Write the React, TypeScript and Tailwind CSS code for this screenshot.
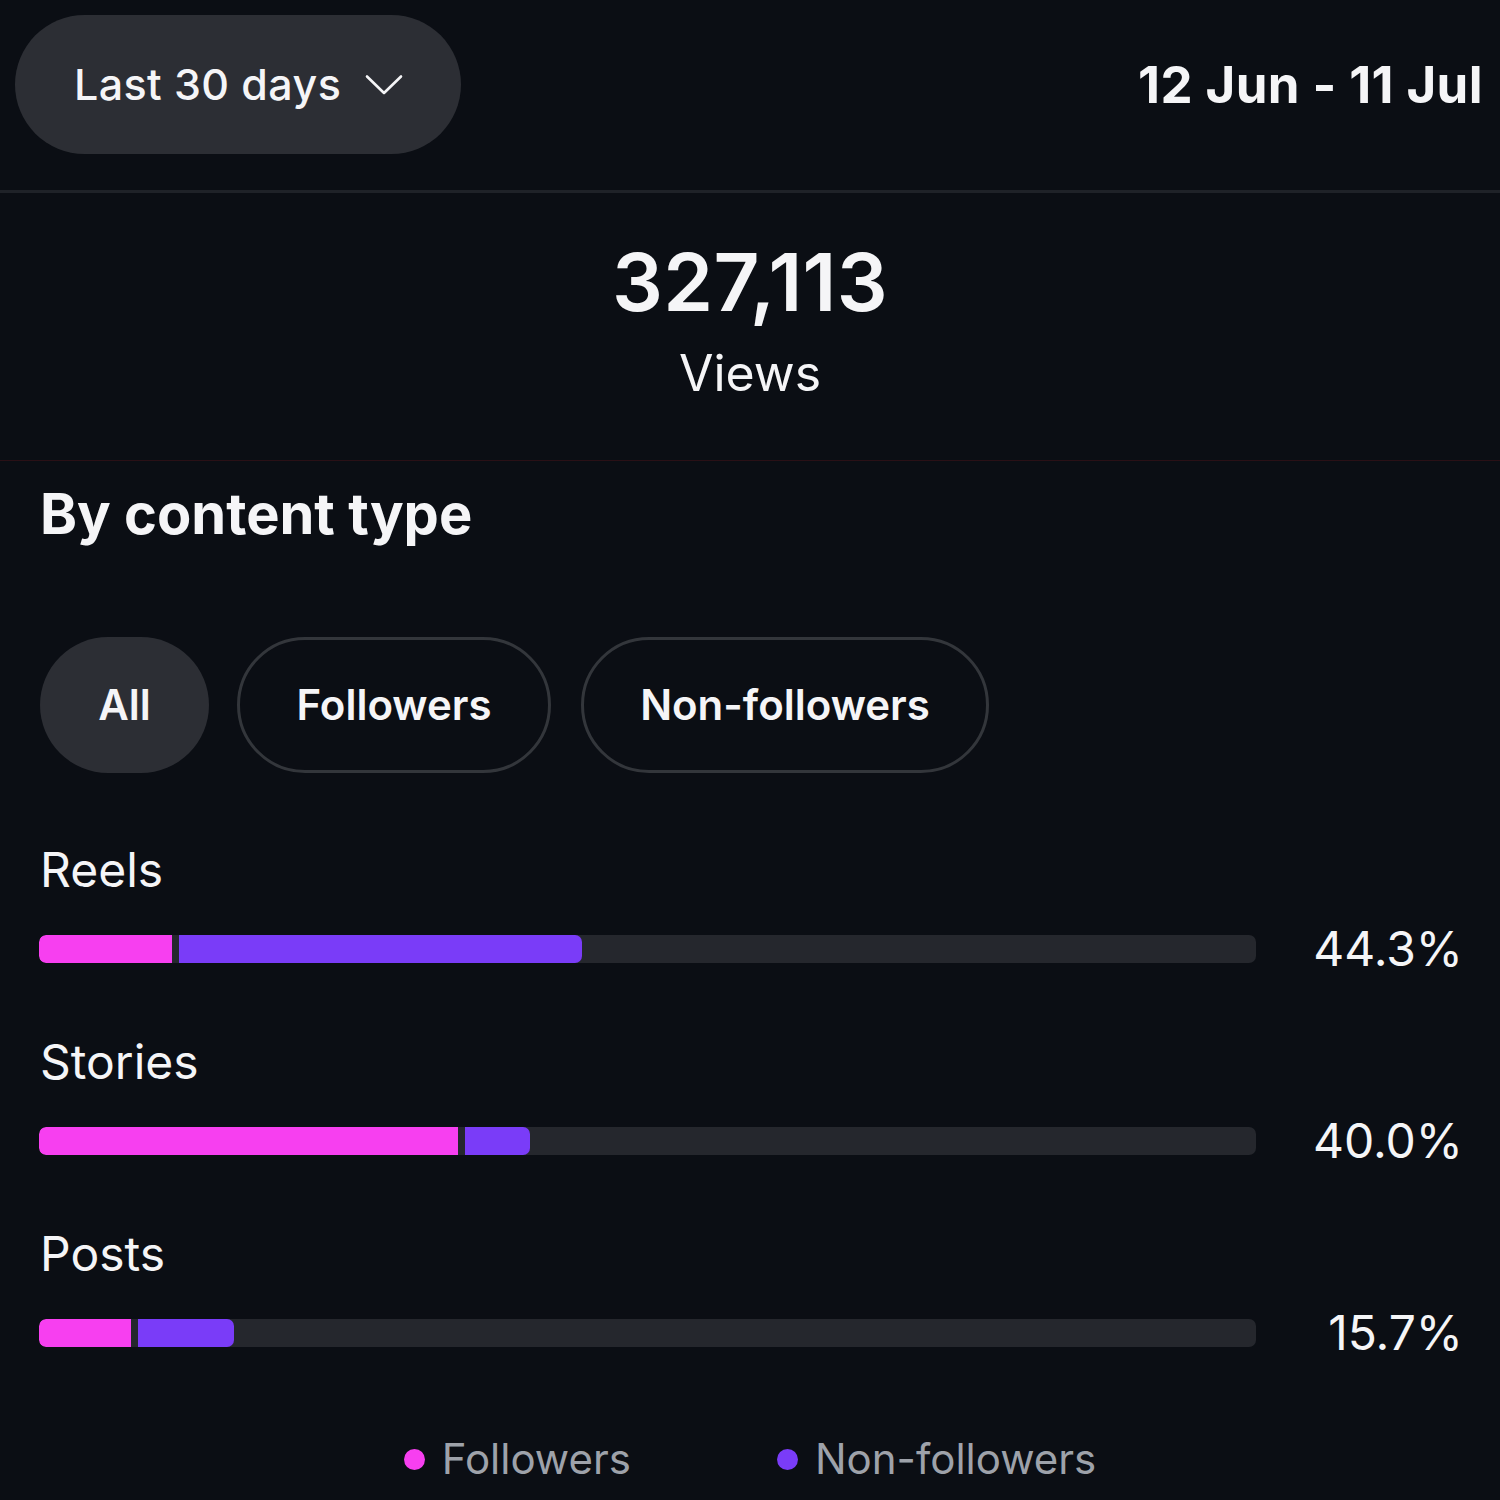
import React from 'react';

const rows = [
  { label: 'Reels', followers: 133, nonFollowers: 403, pct: '44.3%' },
  { label: 'Stories', followers: 419, nonFollowers: 65, pct: '40.0%' },
  { label: 'Posts', followers: 92, nonFollowers: 96, pct: '15.7%' },
];

function Chevron() {
  return (
    <svg width="38" height="22" viewBox="0 0 38 22" fill="none" className="shrink-0">
      <path d="M2 2.5 L19 19 L36 2.5" stroke="#f5f5f7" strokeWidth="2.6" strokeLinecap="round" strokeLinejoin="round" />
    </svg>
  );
}

export default function App() {
  return (
    <div
      className="w-[1500px] h-[1500px] bg-[#0b0e14] text-[#f5f5f7] overflow-hidden"
      style={{ fontFamily: 'Inter, "Noto Sans", "Liberation Sans", sans-serif' }}
    >
      {/* HEADER */}
      <div className="flex items-center justify-between pl-[15px] pr-[17px] pt-[15px]">
        <button className="h-[139px] w-[446px] rounded-full bg-[#2c2e34] flex items-center gap-[24px] pl-[59px]">
          <span className="text-[43px] font-medium leading-none tracking-[0.4px]">Last 30 days</span>
          <Chevron />
        </button>
        <div className="text-[51px] font-bold leading-none tracking-[0.4px]">12 Jun - 11 Jul</div>
      </div>

      <div className="mt-[36px] h-[3px] bg-[#1f2228]" />

      {/* TOTAL */}
      <div className="flex flex-col items-center pt-[49px] pb-[62px] border-b border-[#2a1016]">
        <div className="text-[80px] font-semibold leading-none tracking-[0.3px]">327,113</div>
        <div className="mt-[26px] text-[50px] leading-none">Views</div>
      </div>

      {/* BY CONTENT TYPE */}
      <div className="pl-[40px] pr-[37px]">
        <h2 className="mt-[25px] text-[56px] font-bold leading-none">By content type</h2>

        <div className="mt-[95px] flex items-center">
          <div className="h-[136px] w-[169px] rounded-full bg-[#2c2e34] flex items-center justify-center text-[42px] font-semibold leading-none">
            All
          </div>
          <div className="ml-[28px] h-[136px] w-[314px] rounded-full border-[3px] border-[#33363b] flex items-center justify-center text-[42px] font-semibold leading-none">
            Followers
          </div>
          <div className="ml-[30px] h-[136px] w-[408px] rounded-full border-[3px] border-[#33363b] flex items-center justify-center text-[42px] font-semibold leading-none">
            Non-followers
          </div>
        </div>

        <div className="mt-[73px] flex flex-col gap-[75px]">
          {rows.map((row) => (
            <div key={row.label}>
              <div className="text-[48px] leading-none">{row.label}</div>
              <div className="mt-[41px] h-[28px] flex items-center">
                <div className="h-[28px] w-[1217px] -ml-px rounded-[7px] bg-[#25272d] flex overflow-hidden">
                  <div className="h-full bg-[#f73ff0] rounded-l-[7px]" style={{ width: row.followers }} />
                  <div className="h-full bg-[#7a3cf8] ml-[7px] rounded-r-[7px]" style={{ width: row.nonFollowers }} />
                </div>
                <div className="flex-1 text-right text-[48px] leading-[28px]">{row.pct}</div>
              </div>
            </div>
          ))}
        </div>
      </div>

      {/* LEGEND */}
      <div className="mt-[91px] flex items-center justify-center gap-[146px] text-[42px] leading-none text-[#9ea2aa]">
        <div className="flex items-center gap-[17px]">
          <span className="w-[21px] h-[21px] rounded-full bg-[#f73ff0]" />
          <span>Followers</span>
        </div>
        <div className="flex items-center gap-[17px]">
          <span className="w-[21px] h-[21px] rounded-full bg-[#7a3cf8]" />
          <span>Non-followers</span>
        </div>
      </div>
    </div>
  );
}
